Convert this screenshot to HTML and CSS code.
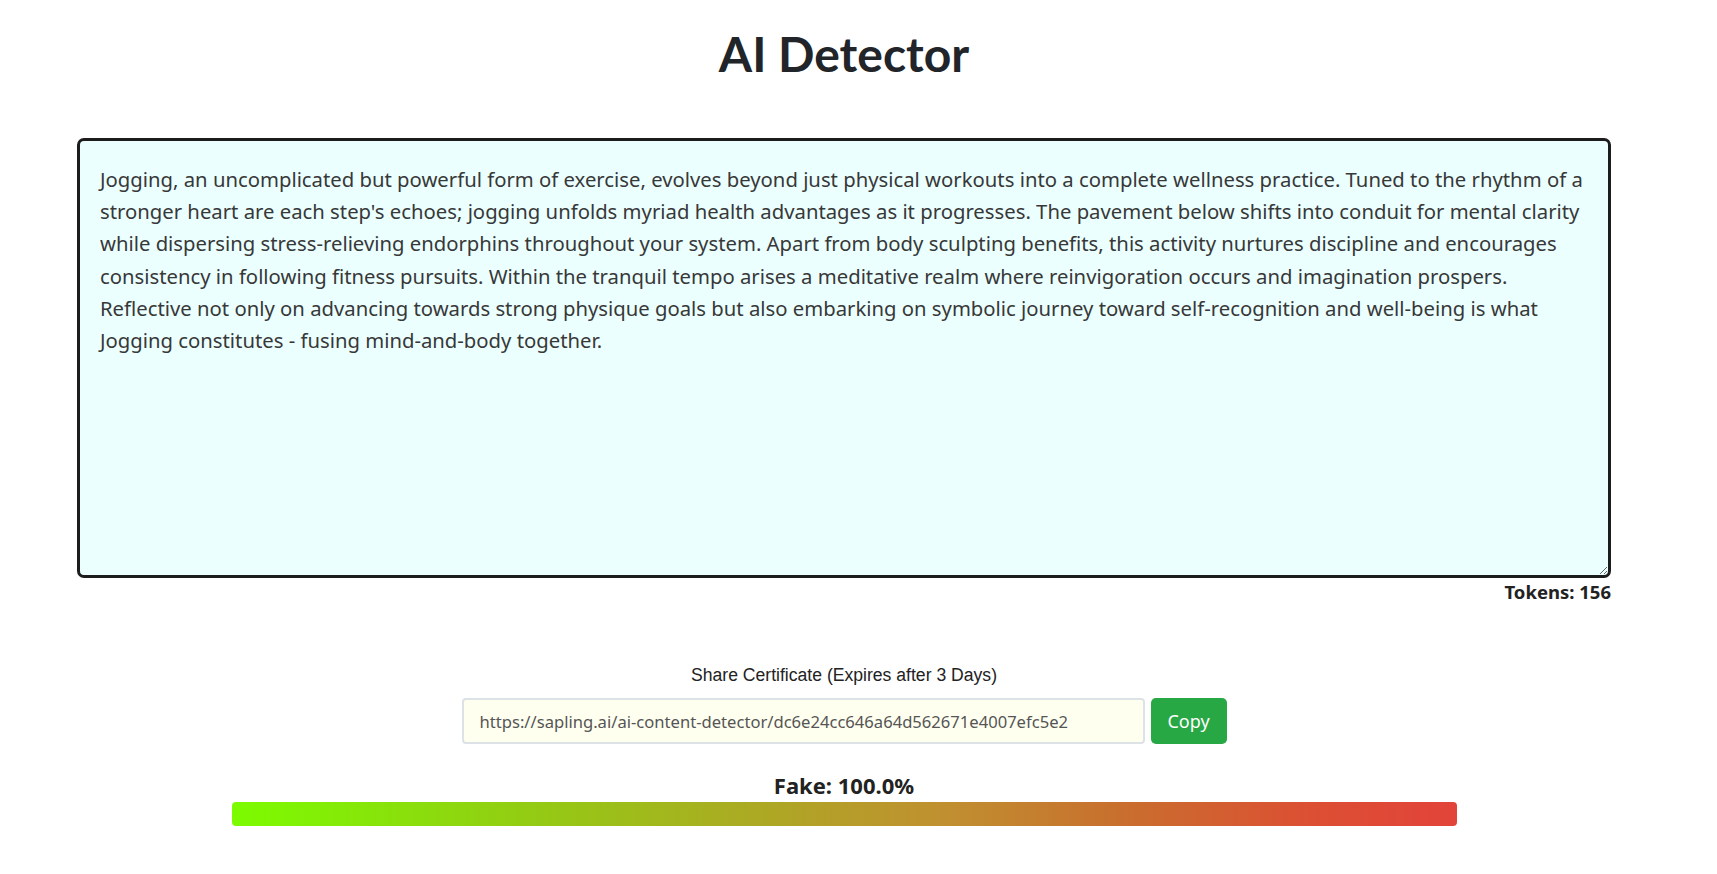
FILE: index.html
```html
<!DOCTYPE html>
<html lang="en">
<head>
<meta charset="utf-8">
<title>AI Detector</title>
<link rel="stylesheet" href="styles.css">
</head>
<body>
<main class="page">
  <h1 class="title">AI Detector</h1>
  <textarea class="editor" spellcheck="false">Jogging, an uncomplicated but powerful form of exercise, evolves beyond just physical workouts into a complete wellness practice. Tuned to the rhythm of a stronger heart are each step's echoes; jogging unfolds myriad health advantages as it progresses. The pavement below shifts into conduit for mental clarity while dispersing stress-relieving endorphins throughout your system. Apart from body sculpting benefits, this activity nurtures discipline and encourages consistency in following fitness pursuits. Within the tranquil tempo arises a meditative realm where reinvigoration occurs and imagination prospers. Reflective not only on advancing towards strong physique goals but also embarking on symbolic journey toward self-recognition and well-being is what Jogging constitutes - fusing mind-and-body together.</textarea>
  <div class="tokens">Tokens: 156</div>
  <section class="share">
    <div class="share-label">Share Certificate (Expires after 3 Days)</div>
    <div class="share-row">
      <input class="share-input" type="text" readonly value="https://sapling.ai/ai-content-detector/dc6e24cc646a64d562671e4007efc5e2">
      <button class="copy-btn" type="button">Copy</button>
    </div>
  </section>
  <section class="result">
    <div class="result-label">Fake: 100.0%</div>
    <div class="meter"></div>
  </section>
</main>
</body>
</html>
```
FILE: styles.css
```css
html, body {
  margin: 0;
  padding: 0;
  background: #ffffff;
}
body {
  font-family: "Noto Sans", "Open Sans", sans-serif;
  color: #212529;
}
.page {
  width: 1534px;
  margin-left: 77px;
  display: flex;
  flex-direction: column;
  align-items: center;
}
.title {
  margin: 24px 0 0;
  height: 60px;
  font-family: "Lato", sans-serif;
  font-weight: 700;
  font-size: 48px;
  line-height: 60px;
  color: #212529;
}
.editor {
  margin-top: 54px;
  box-sizing: border-box;
  width: 1534px;
  height: 440px;
  padding: 22px 20px 20px;
  border: 3px solid #1c1c1c;
  border-radius: 7px;
  background: #ebffff;
  font-family: "Noto Sans", "Open Sans", sans-serif;
  font-size: 20.3px;
  line-height: 32.2px;
  color: #383838;
  resize: both;
  outline: none;
  overflow: hidden;
}
.tokens {
  align-self: flex-end;
  margin-top: 1px;
  font-weight: 700;
  font-size: 18.5px;
  line-height: 26px;
  color: #222;
}
.share {
  margin-top: 58px;
  width: 767px;
  display: flex;
  flex-direction: column;
  align-items: center;
}
.share-label {
  font-family: "Liberation Sans", Arial, sans-serif;
  font-size: 17.6px;
  line-height: 24px;
  color: #222;
}
.share-row {
  margin-top: 11px;
  display: flex;
  gap: 6px;
  width: 765px;
}
.share-input {
  flex: 1;
  box-sizing: border-box;
  height: 46px;
  padding: 0 16px;
  border: 2px solid #dde2e6;
  border-radius: 4px;
  background: #fffff0;
  font-family: "Noto Sans", "Open Sans", sans-serif;
  font-size: 16.6px;
  color: #555;
  outline: none;
}
.copy-btn {
  box-sizing: border-box;
  width: 76px;
  height: 46px;
  border: none;
  border-radius: 5px;
  background: #28a745;
  color: #fff;
  font-family: "Noto Sans", "Open Sans", sans-serif;
  font-size: 18px;
  cursor: pointer;
}
.result {
  margin-top: 27px;
  width: 1225px;
  display: flex;
  flex-direction: column;
  align-items: center;
}
.result-label {
  font-weight: 700;
  font-size: 22px;
  line-height: 28px;
  color: #222;
}
.meter {
  margin-top: 3px;
  width: 100%;
  height: 24px;
  border-radius: 4px;
  background: linear-gradient(to right, #7cfc00 0%, #94ca14 25%, #b3a028 48%, #c09030 58%, #c8702e 72%, #dc4f33 88%, #e2433a 100%);
}
```
